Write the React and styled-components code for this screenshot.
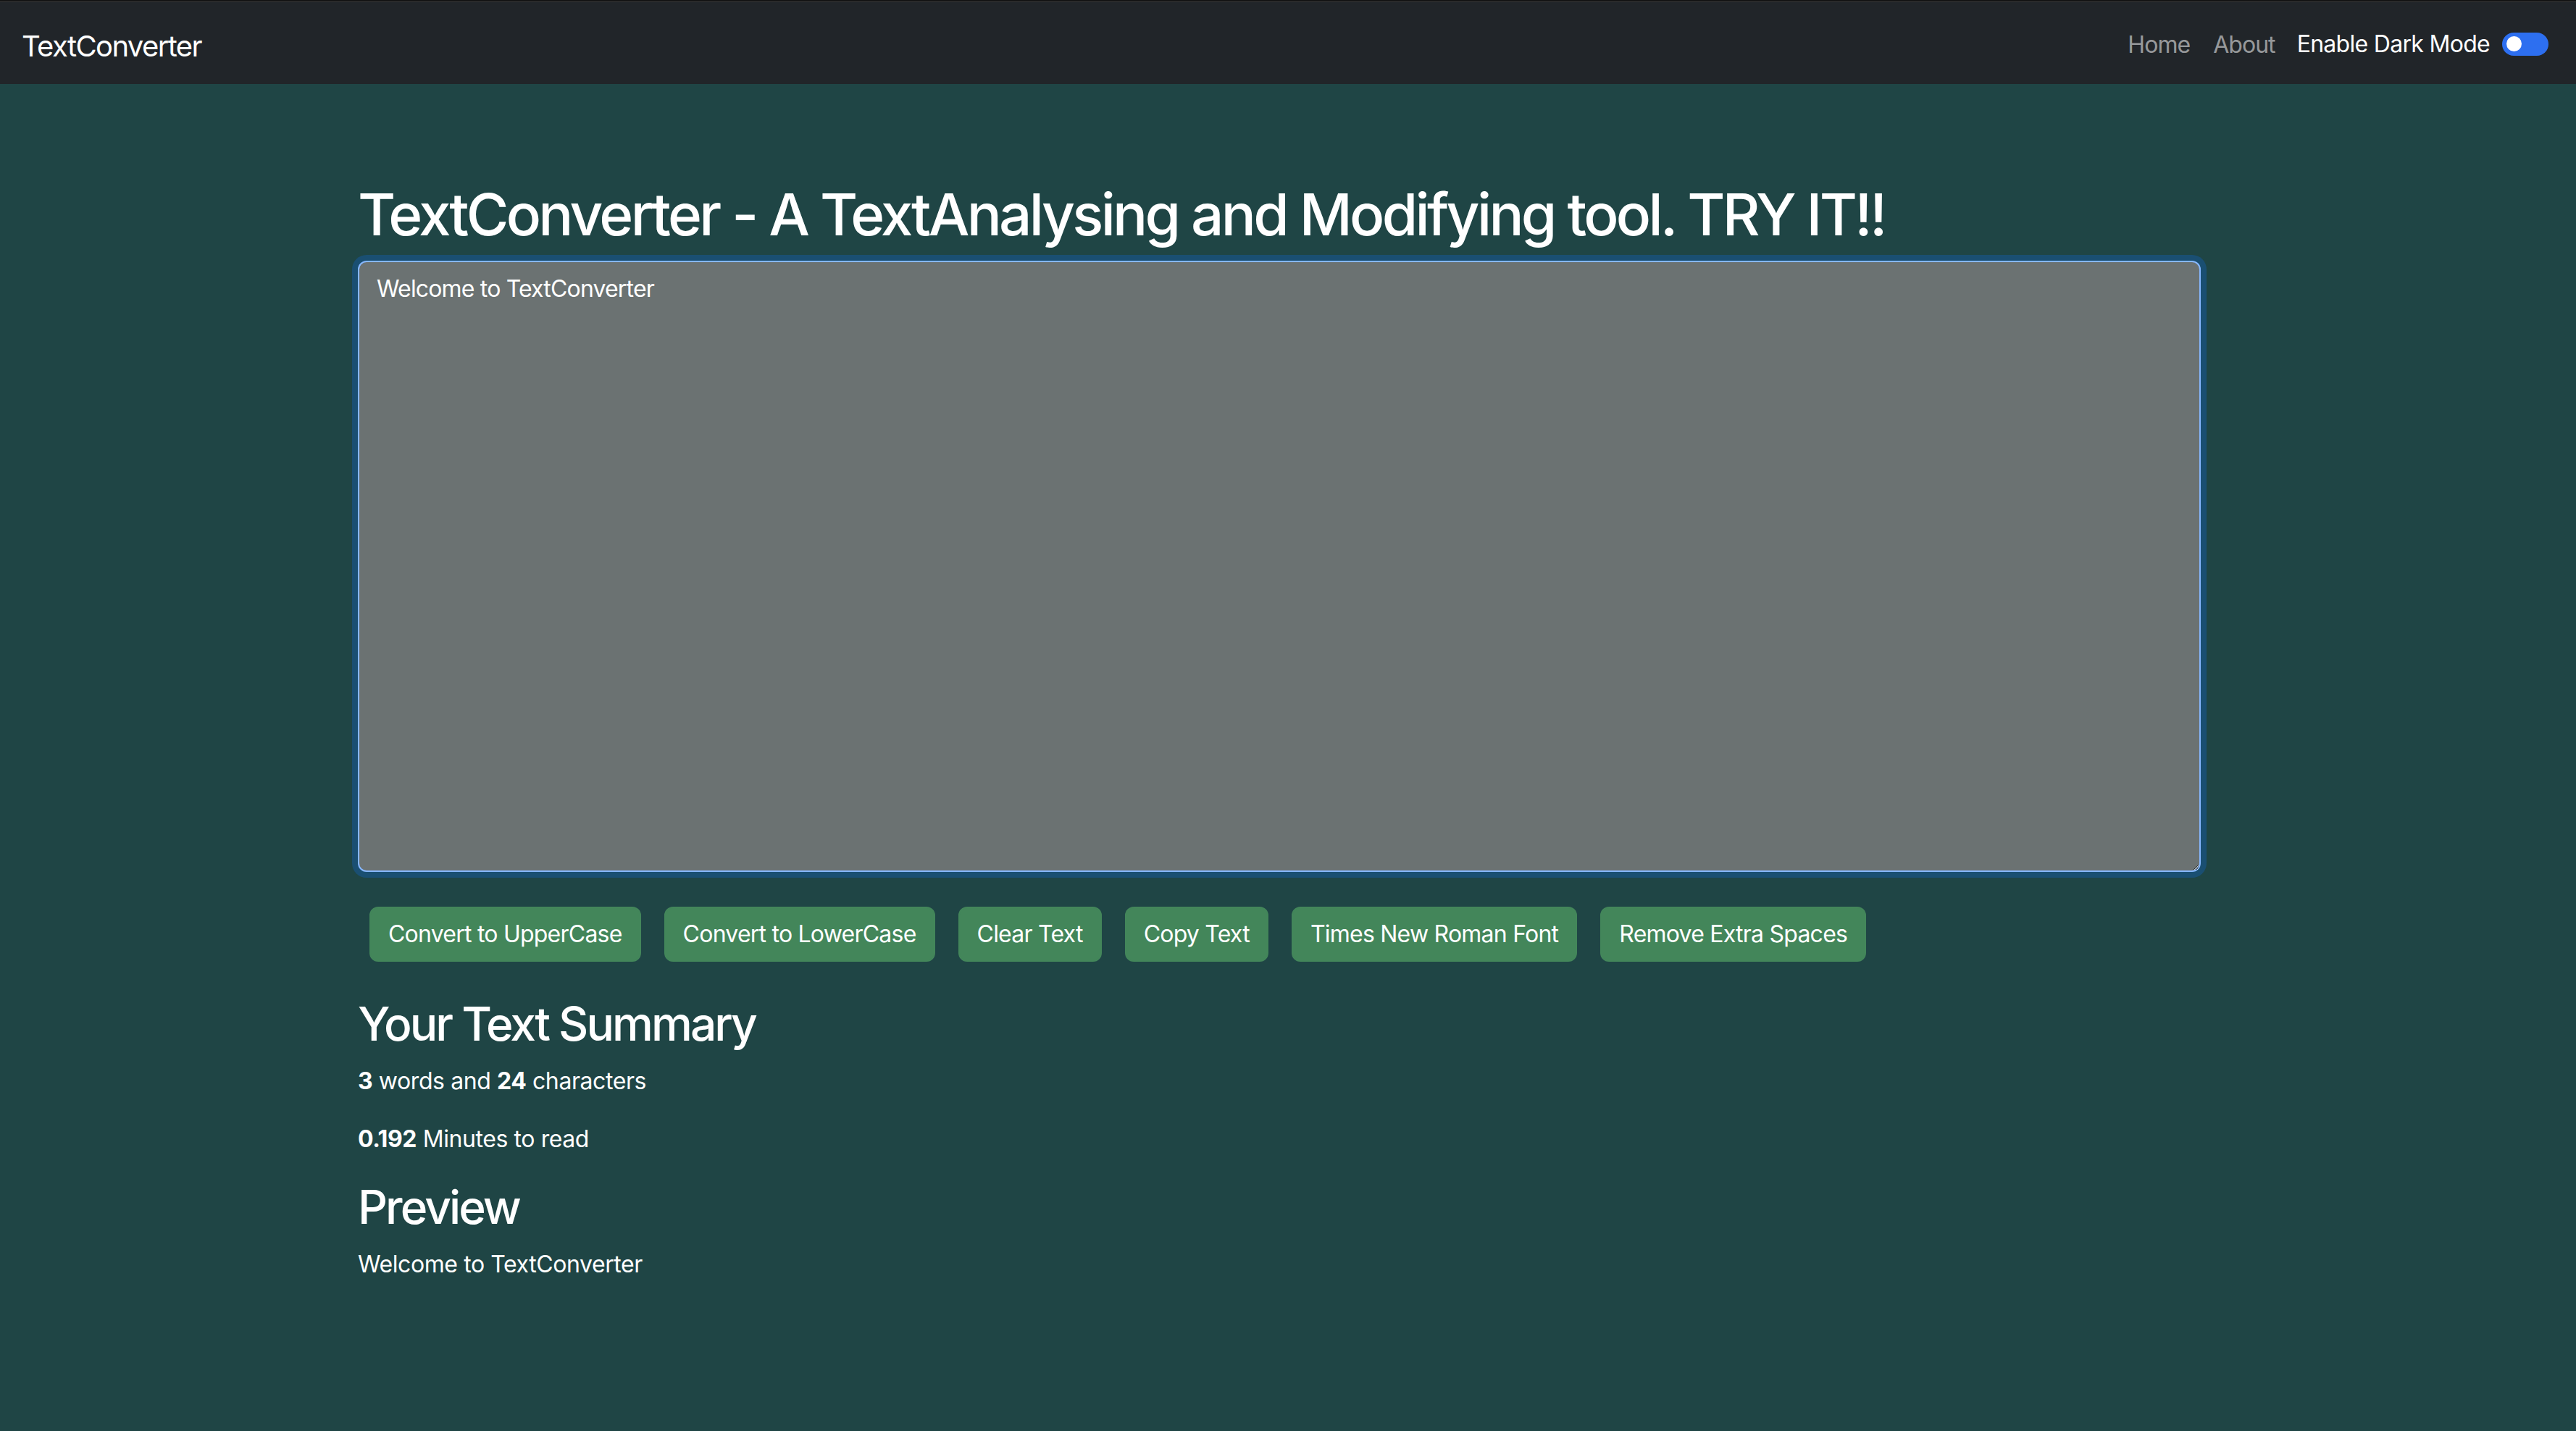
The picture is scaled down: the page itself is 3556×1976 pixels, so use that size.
import React, { useState } from 'react';
import styled, { createGlobalStyle } from 'styled-components';

const GlobalStyle = createGlobalStyle`
  html, body {
    margin: 0;
    padding: 0;
    background: #1f4545;
    font-family: Inter, "Noto Sans", "Liberation Sans", sans-serif;
    letter-spacing: -0.026em;
    color: #ffffff;
  }
  * {
    box-sizing: border-box;
  }
`;

const Page = styled.div`
  min-height: 1976px;
  background: #1f4545;
`;

const Navbar = styled.nav`
  display: flex;
  align-items: center;
  justify-content: space-between;
  height: 116px;
  padding: 4px 38px 0 30px;
  background: #212529;
  border-top: 2px solid #141414;
  box-shadow: inset 0 1px 0 #3a3a3a;
`;

const Brand = styled.a`
  font-size: 40px;
  letter-spacing: -0.04em;
  color: #ffffff;
  text-decoration: none;
  line-height: 1;
  margin-top: 6px;
`;

const NavRight = styled.div`
  display: flex;
  align-items: center;
`;

const NavLink = styled.a`
  font-size: 32px;
  letter-spacing: -0.03em;
  color: rgba(255, 255, 255, 0.55);
  text-decoration: none;
  padding: 0 16px;
`;

const SwitchLabel = styled.label`
  display: flex;
  align-items: center;
  gap: 17px;
  margin-left: 14px;
  font-size: 32px;
  letter-spacing: -0.022em;
  color: #ffffff;
  margin-top: -2px;
`;

const Switch = styled.span`
  position: relative;
  display: inline-block;
  width: 64px;
  height: 32px;
  border-radius: 16px;
  background: #2d6ff0;
  margin-top: 2px;

  &::after {
    content: '';
    position: absolute;
    top: 5px;
    left: ${p => (p.on ? '37px' : '6px')};
    width: 21px;
    height: 21px;
    border-radius: 50%;
    background: #ffffff;
  }
`;

const Container = styled.main`
  width: 2544px;
  margin-left: 494px;
  padding-top: 132px;
`;

const Title = styled.h1`
  margin: 0 0 16px;
  font-size: 80px;
  font-weight: 500;
  letter-spacing: -0.046em;
  line-height: 1.2;
`;

const TextBox = styled.textarea`
  display: block;
  width: 100%;
  height: 844px;
  padding: 13px 24px 12px;
  font-family: inherit;
  font-size: 32px;
  letter-spacing: -0.026em;
  line-height: 1.5;
  color: #ffffff;
  caret-color: #ffffff;
  background: #6b7272;
  border: 2px solid #86b7fe;
  border-radius: 12px;
  box-shadow: 0 0 0 8px rgba(13, 110, 253, 0.25);
  outline: none;
  resize: vertical;
  margin-bottom: 32px;
`;

const ButtonRow = styled.div`
  display: flex;
  flex-wrap: wrap;
`;

const Button = styled.button`
  margin: 16px;
  padding: 12px 24px;
  font-family: inherit;
  font-size: 32px;
  letter-spacing: -0.024em;
  line-height: 1.5;
  color: #ffffff;
  background: #43865a;
  border: 2px solid #43865a;
  border-radius: 12px;
  cursor: pointer;
`;

const Summary = styled.section`
  margin-top: 32px;
`;

const Heading = styled.h2`
  margin: 0 0 16px;
  font-size: 64px;
  font-weight: 500;
  letter-spacing: -0.046em;
  line-height: 1.2;
`;

const Para = styled.p`
  margin: 0 0 32px;
  font-size: 32px;
  line-height: 1.5;
`;

export default function App() {
  const [text, setText] = useState('Welcome to TextConverter');
  const words = text.split(/\s+/).filter(w => w.length !== 0).length;

  return (
    <Page>
      <GlobalStyle />
      <Navbar>
        <Brand href="#">TextConverter</Brand>
        <NavRight>
          <NavLink href="#">Home</NavLink>
          <NavLink href="#">About</NavLink>
          <SwitchLabel>
            Enable Dark Mode
            <Switch />
          </SwitchLabel>
        </NavRight>
      </Navbar>
      <Container>
        <Title>TextConverter - A TextAnalysing and Modifying tool. TRY IT!!</Title>
        <TextBox value={text} onChange={e => setText(e.target.value)} />
        <ButtonRow>
          <Button>Convert to UpperCase</Button>
          <Button>Convert to LowerCase</Button>
          <Button>Clear Text</Button>
          <Button>Copy Text</Button>
          <Button>Times New Roman Font</Button>
          <Button>Remove Extra Spaces</Button>
        </ButtonRow>
        <Summary>
          <Heading>Your Text Summary</Heading>
          <Para>
            <b>{words}</b> words and <b>{text.length}</b> characters
          </Para>
          <Para>
            <b>{(0.008 * words * 8).toFixed(3)}</b> Minutes to read
          </Para>
          <Heading>Preview</Heading>
          <Para>{text}</Para>
        </Summary>
      </Container>
    </Page>
  );
}
